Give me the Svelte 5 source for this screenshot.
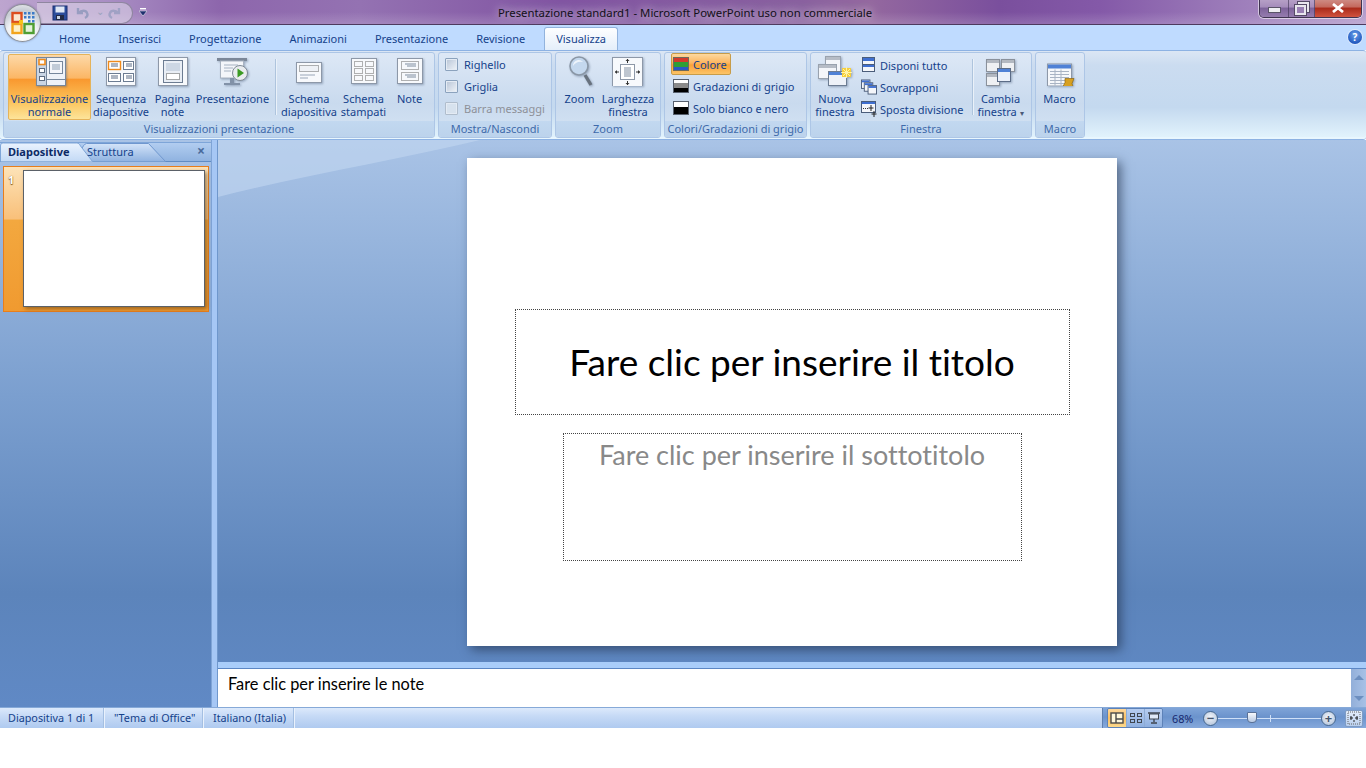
<script lang="ts">
	const tabs = ['Home', 'Inserisci', 'Progettazione', 'Animazioni', 'Presentazione', 'Revisione', 'Visualizza'];
	const active = 'Visualizza';
</script>

<div class="app">
	<header class="titlebar">
		<div class="qat">
			<svg width="16" height="16" viewBox="0 0 16 16">
				<rect x="1" y="1" width="14" height="14" fill="#2b4c9b" stroke="#1b2f70" />
				<rect x="3.5" y="1.5" width="9" height="6" fill="#dfe7f5" />
				<rect x="4" y="10" width="8" height="5" fill="#222a44" />
				<rect x="5" y="11" width="3" height="3" fill="#c9d2e4" />
			</svg>
			<svg class="dim" width="14" height="14" viewBox="0 0 14 14">
				<path d="M2 2v5h5M3 7c2-3 7-3 8 0 1 2 0 4-2 5" fill="none" stroke="#8894b8" stroke-width="2.4" />
			</svg>
			<span class="caret">⌄</span>
			<svg class="dim redo" width="14" height="14" viewBox="0 0 14 14">
				<path d="M12 2v5H7M11 7C9 4 4 4 3 7c-1 2 0 4 2 5" fill="none" stroke="#8894b8" stroke-width="2.4" />
			</svg>
		</div>
		<svg class="qat-more" width="8" height="9" viewBox="0 0 8 9">
			<rect x="1" y="0" width="6" height="1.4" fill="#fff" />
			<path d="M0 3h8L4 8z" fill="#1f2f6e" stroke="#fff" stroke-width=".5" />
		</svg>
		<div class="title">Presentazione standard1 - Microsoft PowerPoint uso non commerciale</div>
		<div class="winctl">
			<span class="wbtn min"><i></i></span>
			<span class="wbtn max"><i></i><b></b></span>
			<span class="wbtn close">
				<svg width="14" height="10" viewBox="0 0 14 10"><path d="M2 1l10 8M12 1L2 9" stroke="#fff" stroke-width="2.8" /></svg>
			</span>
		</div>
	</header>

	<div class="office-btn">
		<svg width="24" height="24" viewBox="0 0 24 24">
			<rect x="1.500" y="2" width="9" height="9" fill="#fbe6d0" stroke="#dc4d1f" stroke-width="2.400" />
			<rect x="1.500" y="13" width="9" height="9" fill="#fdf1c8" stroke="#f2a41d" stroke-width="2.400" />
			<rect x="13.500" y="13" width="9" height="9" fill="#e4f3da" stroke="#4f9e32" stroke-width="2.400" />
			<g fill="#3b7bc8">
				<rect x="13" y="1" width="2.500" height="2.500" />
				<rect x="17" y="1" width="2.500" height="2.500" />
				<rect x="21" y="1" width="2.500" height="2.500" />
				<rect x="13" y="5" width="2.500" height="2.500" />
				<rect x="17" y="5" width="2.500" height="2.500" />
				<rect x="21" y="5" width="2.500" height="2.500" />
				<rect x="17" y="9" width="2.500" height="2.500" />
				<rect x="21" y="9" width="2.500" height="2.500" />
			</g>
			<rect x="8" y="9" width="4" height="4" fill="#f6c21a" />
		</svg>
	</div>

	<nav class="tabs">
		{#each tabs as tab}
			<span class="tab" class:on={tab === active}>{tab}</span>
		{/each}
		<span class="help">?</span>
	</nav>

	<section class="ribbon">
		<div class="group g1">
			<div class="items">
				<div class="big w83 hot">
					<svg width="32" height="32" viewBox="0 0 32 32">
						<rect x="2.5" y="3.5" width="29" height="28" fill="#eef2f8" stroke="#76879c" />
						<rect x="3" y="4" width="9" height="27" fill="#c9d5e4" />
						<path d="M12.5 4v27M12.5 25.5h19" stroke="#76879c" fill="none" />
						<rect x="15.5" y="7.5" width="13" height="12" fill="#f4f6fa" stroke="#76879c" />
						<path d="M18 11h8M18 13h8M18 15h8" stroke="#8ea0b5" />
						<rect x="5" y="5.5" width="6" height="5" fill="#fff" stroke="#ef8a1b" stroke-width="1.6" />
						<rect x="5.5" y="14.5" width="5" height="4" fill="#fff" stroke="#5c6b80" />
						<rect x="5.5" y="22.5" width="5" height="4" fill="#fff" stroke="#5c6b80" />
					</svg>
					<span>Visualizzazione<br />normale</span>
				</div>
				<div class="big w60">
					<svg width="32" height="32" viewBox="0 0 32 32">
						<rect x="1.5" y="3.5" width="29" height="28" fill="#f7f9fc" stroke="#8d98a8" />
						<rect x="3.5" y="7.5" width="12" height="8" fill="#fff" stroke="#ef8a1b" stroke-width="1.4" />
						<rect x="18.5" y="7.5" width="10" height="8" fill="#fff" stroke="#6c7c92" />
						<rect x="3.5" y="19.5" width="12" height="8" fill="#fff" stroke="#6c7c92" />
						<rect x="18.5" y="19.5" width="10" height="8" fill="#fff" stroke="#6c7c92" />
						<path d="M6 10h7M6 12h7M21 10h6M21 12h6M6 22h7M6 24h7M21 22h6M21 24h6" stroke="#5d6d85" />
					</svg>
					<span>Sequenza<br />diapositive</span>
				</div>
				<div class="big w43">
					<svg width="32" height="32" viewBox="0 0 32 32">
						<rect x="1.5" y="3.5" width="29" height="28" fill="#f7f9fc" stroke="#8d98a8" />
						<rect x="6.5" y="6.5" width="19" height="22" fill="#e9eef5" stroke="#6c7c92" />
						<rect x="9" y="9" width="14" height="8" fill="#cdd7e4" />
						<rect x="9.5" y="19.5" width="13" height="6" fill="#fff" stroke="#555" stroke-dasharray="1 1" />
					</svg>
					<span>Pagina<br />note</span>
				</div>
				<div class="big w77">
					<svg width="32" height="32" viewBox="0 0 32 32">
						<g transform="translate(0 2)">
							<rect x="0" y="2" width="30" height="3" fill="#7b8798" />
							<rect x="3.5" y="5" width="23" height="17" fill="#f4f6fa" stroke="#a8b2c0" />
							<path d="M7 9h14M7 12h9M7 15h7" stroke="#a6b2c2" />
							<rect x="13" y="22" width="4" height="5" fill="#8292a8" />
							<rect x="7" y="27" width="16" height="2" fill="#8292a8" />
							<circle cx="23" cy="17" r="7.500" fill="#e9ecef" stroke="#7f8a96" />
							<path d="M20.500 12.500l6.500 4.500-6.500 4.500z" fill="#3a9a22" />
						</g>
					</svg>
					<span>Presentazione</span>
				</div>
				<i class="vsep"></i>
				<div class="big w60">
					<svg width="32" height="32" viewBox="0 0 32 32">
						<rect x="3.5" y="8.500" width="25" height="20" fill="#f7f9fc" stroke="#8d98a8" />
						<rect x="6.5" y="11.500" width="19" height="6" fill="#eef1f6" stroke="#666" stroke-dasharray="1 1" />
						<path d="M7 21h15M7 24h8" stroke="#99a6b8" />
					</svg>
					<span>Schema<br />diapositiva</span>
				</div>
				<div class="big w49">
					<svg width="32" height="32" viewBox="0 0 32 32">
						<rect x="3.5" y="4.500" width="25" height="25" fill="#f7f9fc" stroke="#8d98a8" />
						<g fill="none" stroke="#666" stroke-dasharray="1 1">
							<rect x="6.500" y="7.500" width="8" height="5" />
							<rect x="17.500" y="7.500" width="8" height="5" />
							<rect x="6.500" y="14.500" width="8" height="5" />
							<rect x="17.500" y="14.500" width="8" height="5" />
							<rect x="6.500" y="21.500" width="8" height="5" />
							<rect x="17.500" y="21.500" width="8" height="5" />
						</g>
					</svg>
					<span>Schema<br />stampati</span>
				</div>
				<div class="big w43">
					<svg width="32" height="32" viewBox="0 0 32 32">
						<rect x="3.500" y="4.500" width="25" height="25" fill="#f7f9fc" stroke="#8d98a8" />
						<g fill="none" stroke="#666" stroke-dasharray="1 1">
							<rect x="7.500" y="7.500" width="17" height="8" />
							<rect x="7.500" y="18.500" width="17" height="8" />
						</g>
						<path d="M11 10h11M13 12h9M11 21h11M13 23h9" stroke="#7f8da0" />
					</svg>
					<span>Note</span>
				</div>
			</div>
			<div class="glabel">Visualizzazioni presentazione</div>
		</div>

		<div class="group g2">
			<div class="stack">
				<label class="check"><i></i>Righello</label>
				<label class="check"><i></i>Griglia</label>
				<label class="check off"><i></i>Barra messaggi</label>
			</div>
			<div class="glabel">Mostra/Nascondi</div>
		</div>

		<div class="group g3">
			<div class="items">
				<div class="big w47">
					<svg width="32" height="32" viewBox="0 0 32 32">
						<path d="M21 21l6 10" stroke="#68727e" stroke-width="3.400" />
						<circle cx="15" cy="12" r="9" fill="#c4d8ee" stroke="#8a97a6" stroke-width="1.600" />
						<path d="M9 12c0-4 3-6 6-6 2 0 3 1 4 2-5-1-8 1-10 4z" fill="#eef4fb" />
					</svg>
					<span>Zoom</span>
				</div>
				<div class="big w50">
					<svg width="32" height="32" viewBox="0 0 32 32">
						<g transform="translate(0 2)">
							<rect x=".5" y="1.500" width="30" height="29" fill="#f7f9fc" stroke="#8d98a8" />
							<rect x="8.500" y="8.500" width="14" height="15" fill="#fff" stroke="#8d98a8" />
							<path d="M12 12h7M12 14h7M12 16h7M12 18h7M12 20h7" stroke="#7f8da0" />
							<path d="M15.500 3v4M15.500 25v4M3 16h4M24 16h4" stroke="#333" />
							<path d="M15.500 3l-2 2h4zM15.500 29l-2-2h4zM3 16l2-2v4zM28 16l-2-2v4z" fill="#333" />
						</g>
					</svg>
					<span>Larghezza<br />finestra</span>
				</div>
			</div>
			<div class="glabel">Zoom</div>
		</div>

		<div class="group g4">
			<div class="stack">
				<div class="row hot"><i class="swatch color"></i>Colore</div>
				<div class="row"><i class="swatch gray"></i>Gradazioni di grigio</div>
				<div class="row"><i class="swatch bw"></i>Solo bianco e nero</div>
			</div>
			<div class="glabel">Colori/Gradazioni di grigio</div>
		</div>

		<div class="group g5">
			<div class="items">
				<div class="big w48">
					<svg width="36" height="32" viewBox="0 0 36 32">
						<rect x="8.500" y="2.500" width="15" height="19" fill="#f4f6fa" stroke="#99a2ae" />
						<rect x="9" y="3" width="14" height="3" fill="#b6bcc6" />
						<rect x="1.500" y="10.500" width="18" height="14" fill="#f4f6fa" stroke="#99a2ae" />
						<rect x="2" y="11" width="17" height="3" fill="#b6bcc6" />
						<rect x="11.500" y="17.500" width="18" height="14" fill="#eef2f8" stroke="#6c7c92" />
						<rect x="12" y="18" width="17" height="3" fill="#4f81d6" />
						<rect x="25" y="14" width="9" height="9" fill="#f6cf3c" />
						<path d="M29.500 13v11M24 18.500h11M26 15l7 7M33 15l-7 7" stroke="#fff3a8" />
					</svg>
					<span>Nuova<br />finestra</span>
				</div>
				<div class="stack small">
					<div class="row">
						<svg width="16" height="16" viewBox="0 0 14 16">
							<rect x=".5" y=".5" width="12" height="14" fill="#f4f6fa" stroke="#4b5d7a" />
							<rect x="1" y="1" width="11" height="3" fill="#3f6fd0" />
							<rect x="1" y="8" width="11" height="2" fill="#3f6fd0" />
							<path d="M1 7.500h11" stroke="#4b5d7a" />
						</svg>
						Disponi tutto
					</div>
					<div class="row">
						<svg width="16" height="16" viewBox="0 0 17 16">
							<rect x=".5" y=".5" width="9" height="9" fill="#f4f6fa" stroke="#4b5d7a" />
							<rect x="1" y="1" width="8" height="2" fill="#3f6fd0" />
							<rect x="3.500" y="3.500" width="9" height="9" fill="#f4f6fa" stroke="#4b5d7a" />
							<rect x="4" y="4" width="8" height="2" fill="#3f6fd0" />
							<rect x="7.500" y="6.500" width="9" height="9" fill="#f4f6fa" stroke="#4b5d7a" />
							<rect x="8" y="7" width="8" height="2" fill="#3f6fd0" />
						</svg>
						Sovrapponi
					</div>
					<div class="row">
						<svg width="16" height="16" viewBox="0 0 16 16">
							<rect x=".5" y=".5" width="14" height="11" fill="#f4f6fa" stroke="#4b5d7a" />
							<rect x="1" y="1" width="13" height="2" fill="#3f6fd0" />
							<path d="M2 7.500h6" stroke="#333" stroke-dasharray="1 1" />
							<path d="M10 4v6M7.500 7h5M13 10v6M10.500 13h5" stroke="#222" />
						</svg>
						Sposta divisione
					</div>
				</div>
				<i class="vsep s5"></i>
				<div class="big w56">
					<svg width="32" height="32" viewBox="0 0 32 32">
						<g transform="translate(0 3)">
							<rect x="1.500" y="2.500" width="13" height="12" fill="#eef0f3" stroke="#8a919b" />
							<rect x="2" y="3" width="12" height="3" fill="#b2b8c1" />
							<rect x="16.500" y="2.500" width="13" height="12" fill="#eef0f3" stroke="#8a919b" />
							<rect x="17" y="3" width="12" height="3" fill="#b2b8c1" />
							<rect x="1.500" y="16.500" width="13" height="12" fill="#eef0f3" stroke="#8a919b" />
							<rect x="2" y="17" width="12" height="3" fill="#b2b8c1" />
							<rect x="12.500" y="11.500" width="13" height="13" fill="#eaf0fa" stroke="#5b6c86" />
							<rect x="13" y="12" width="12" height="3" fill="#4f81d6" />
						</g>
					</svg>
					<span>Cambia<br />finestra <em>▾</em></span>
				</div>
			</div>
			<div class="glabel">Finestra</div>
		</div>

		<div class="group g6">
			<div class="items">
				<div class="big w47">
					<svg width="32" height="32" viewBox="0 0 32 32">
						<g transform="translate(0 3.500)">
							<rect x="3.500" y="6.500" width="24" height="22" fill="#f6f8fb" stroke="#8d98a8" />
							<rect x="4" y="7" width="23" height="4" fill="#4f81d6" />
							<path d="M6 14h19M6 17h19M6 20h19M6 23h19M6 26h14M11 12v16M17 12v16" stroke="#a9b4c4" />
							<path d="M21 21h9l-2 5 1 3h-10l2-4z" fill="#d7a021" stroke="#8c6613" stroke-width=".7" />
						</g>
					</svg>
					<span>Macro</span>
				</div>
			</div>
			<div class="glabel">Macro</div>
		</div>
	</section>

	<main class="work">
		<aside class="pane">
			<div class="pane-tabs">
				<svg class="tabshape" width="212" height="20" viewBox="0 0 212 20">
					<defs>
						<linearGradient id="tabOn" x1="0" y1="0" x2="0" y2="1">
							<stop offset="0" stop-color="#eaf3fe" />
							<stop offset="1" stop-color="#c3d9f5" />
						</linearGradient>
						<linearGradient id="tabOff" x1="0" y1="0" x2="0" y2="1">
							<stop offset="0" stop-color="#d4e4f9" />
							<stop offset="1" stop-color="#8fb2e0" />
						</linearGradient>
					</defs>
					<path d="M79.500 19.500c1-7 2-17 7-18h62l17 18" fill="url(#tabOff)" stroke="#6f97cf" />
					<path d="M.5 19.500V4c0-2 1-3 3-3h73c2 0 3 1 4 3l12 15.500" fill="url(#tabOn)" stroke="#7ea5d8" />
				</svg>
				<span class="ptab on">Diapositive</span>
				<span class="ptab">Struttura</span>
				<span class="pclose">×</span>
			</div>
			<div class="thumbrow">
				<span class="num">1</span>
				<div class="thumb"></div>
			</div>
		</aside>

		<div class="right">
			<div class="stage">
				<svg class="swoosh" width="300" height="62" viewBox="0 0 300 62" preserveAspectRatio="none">
					<path d="M0 0h262C180 20 80 36 0 57z" fill="#c2d6f0" fill-opacity=".62" />
				</svg>
				<div class="slide">
					<div class="ph ph-title">Fare clic per inserire il titolo</div>
					<div class="ph ph-sub">Fare clic per inserire il sottotitolo</div>
				</div>
			</div>
			<div class="notes">
				<div class="notes-text">Fare clic per inserire le note</div>
				<div class="scroll"><i class="up"></i><i class="down"></i></div>
			</div>
		</div>
	</main>

	<footer class="status">
		<span class="cell">Diapositiva 1 di 1</span>
		<span class="cell">"Tema di Office"</span>
		<span class="cell">Italiano (Italia)</span>
		<div class="status-right">
			<div class="views">
				<span class="view on">
					<svg width="14" height="12" viewBox="0 0 14 12"><rect x="1" y="1" width="12" height="10" fill="#fff6d8" stroke="#4a4a4a" stroke-width="1.400" /><path d="M6 1v10M6 7h7" stroke="#4a4a4a" stroke-width="1.400" /></svg>
				</span>
				<span class="view">
					<svg width="14" height="12" viewBox="0 0 14 12"><g fill="none" stroke="#3f4650"><rect x="1.500" y="1.500" width="4" height="3" /><rect x="8.500" y="1.500" width="4" height="3" /><rect x="1.500" y="7.500" width="4" height="3" /><rect x="8.500" y="7.500" width="4" height="3" /></g></svg>
				</span>
				<span class="view">
					<svg width="14" height="12" viewBox="0 0 14 12"><path d="M1 1h12" stroke="#3f4650" stroke-width="1.500" /><rect x="2.500" y="2" width="9" height="5" fill="#dfe9f7" stroke="#3f4650" /><path d="M7 7v3M4 11h6" stroke="#3f4650" stroke-width="1.400" /></svg>
				</span>
			</div>
			<span class="zoomval">68%</span>
			<span class="round">−</span>
			<div class="slider"><i class="tick"></i><i class="knob"></i></div>
			<span class="round">+</span>
			<span class="fit">
				<svg width="14" height="14" viewBox="0 0 14 14"><path d="M1 1h12v12H1z" fill="none" stroke="#666" stroke-dasharray="1 1" /><path d="M3 7h3M8 7h3M10 5v4M4 5v4M7 3v2M7 9v2" stroke="#222" /></svg>
			</span>
		</div>
	</footer>
</div>

<style>
	:global(body) {
		margin: 0;
		background: #fff;
	}

	.app {
		position: relative;
		width: 1366px;
		height: 728px;
		display: flex;
		flex-direction: column;
		overflow: hidden;
		font-family: 'Noto Sans', 'Open Sans', sans-serif;
		font-size: 11px;
		color: #15428b;
	}

	/* title bar */
	.titlebar {
		position: relative;
		height: 25px;
		flex: none;
		display: flex;
		align-items: flex-start;
		padding-left: 37px;
		box-sizing: border-box;
		border-bottom: 1px solid #4d3a5e;
		background:
			linear-gradient(180deg, rgba(255, 255, 255, 0) 50%, rgba(255, 255, 255, 0.16) 100%),
			linear-gradient(90deg, #bda5cf 0, #a88dc3 110px, #8d66ac 220px, #9472b2 360px, #8154a2 560px, #89609f 800px, #94689f 870px, #7a4f9d 1000px, #8459a8 1100px, #9a79b8 1220px, #b49ccb 1366px);
	}

	.qat {
		display: flex;
		align-items: center;
		gap: 8px;
		height: 22px;
		width: 96px;
		padding-left: 15px;
		box-sizing: border-box;
		margin-top: 2px;
		border: 1px solid #8f86a0;
		border-left: none;
		border-radius: 0 12px 12px 0;
		background: rgba(224, 216, 234, 0.55);
	}

	.qat svg.dim {
		opacity: 0.75;
	}

	.qat svg.redo {
		opacity: 0.6;
	}

	.caret {
		color: #9aa2bd;
		font-size: 10px;
		line-height: 10px;
		width: 6px;
		margin: -4px -2.5px 0;
	}

	.qat-more {
		margin: 8px 0 0 6px;
	}

	.title {
		position: absolute;
		left: 0;
		right: 0;
		top: 5px;
		text-align: center;
		padding-left: 4px;
		font-size: 11.35px;
		line-height: 16px;
		color: #121018;
		text-shadow: 0 0 8px rgba(255, 255, 255, 0.75), 0 0 14px rgba(255, 255, 255, 0.5);
		pointer-events: none;
	}

	.winctl {
		position: absolute;
		top: -1px;
		right: 4px;
		display: flex;
		height: 19px;
		box-sizing: border-box;
		border: 1px solid #3f3450;
		border-top: none;
		border-radius: 0 0 5px 5px;
		box-shadow: 0 0 0 1px rgba(255, 255, 255, 0.55);
		overflow: hidden;
	}

	.wbtn {
		position: relative;
		display: flex;
		align-items: center;
		justify-content: center;
		height: 100%;
		background: linear-gradient(180deg, #b8a2c8 0, #a58cbb 45%, #7d629a 50%, #957cae 100%);
		border-right: 1px solid rgba(60, 50, 80, 0.6);
	}

	.min {
		width: 28px;
	}

	.min i {
		width: 11px;
		height: 4px;
		margin-top: 3px;
		background: #eeeef2;
		border: 1px solid #5a5468;
	}

	.max {
		width: 25px;
	}

	.max i,
	.max b {
		position: absolute;
		width: 7px;
		height: 6px;
		border: 2px solid #e9e7ee;
		outline: 1px solid #554a66;
	}

	.max i {
		left: 9px;
		top: 3px;
	}

	.max b {
		left: 6px;
		top: 6px;
		background: #9a80b4;
	}

	.close {
		width: 46px;
		border-right: none;
		background: linear-gradient(180deg, #cf8f88 0, #c4685c 45%, #a92a1a 50%, #d0533f 100%);
	}

	.office-btn {
		position: absolute;
		left: 4px;
		top: 4px;
		width: 37px;
		height: 38px;
		box-sizing: border-box;
		display: flex;
		align-items: center;
		justify-content: center;
		border-radius: 50%;
		border: 1px solid #8c8f96;
		background: radial-gradient(circle at 50% 80%, #ffffff 0, #eef1f4 45%, #c7ccd4 70%, #f4f4f6 100%);
		box-shadow: 0 0 2px rgba(50, 60, 90, 0.5);
		z-index: 2;
	}

	/* tabs */
	.tabs {
		position: relative;
		flex: none;
		height: 25px;
		display: flex;
		align-items: flex-end;
		padding-left: 45px;
		box-sizing: border-box;
		background: #bfdbff;
	}

	.tab {
		padding: 0 14px;
		height: 23px;
		line-height: 24px;
		box-sizing: border-box;
		white-space: nowrap;
	}

	.tab.on {
		margin-left: 5px;
		padding: 0 11px;
		background: linear-gradient(180deg, #fdfeff 0, #e4eefa 100%);
		border: 1px solid #92b3dd;
		border-bottom: none;
		border-radius: 3px 3px 0 0;
		line-height: 22px;
	}

	.help {
		position: absolute;
		right: 4px;
		top: 5px;
		width: 14px;
		height: 14px;
		border-radius: 50%;
		text-align: center;
		font-weight: 700;
		font-size: 10px;
		line-height: 14px;
		color: #fff;
		background: radial-gradient(circle at 50% 35%, #6aa0ea 0, #1f56bd 75%);
		box-shadow: 0 0 0 1px #dce8fb;
	}

	/* ribbon */
	.ribbon {
		flex: none;
		height: 90px;
		box-sizing: border-box;
		display: flex;
		gap: 3px;
		padding: 1px 3px 0;
		border: 1px solid #8db2e3;
		border-width: 1px 0;
		border-radius: 3px;
		background: linear-gradient(180deg, #dbe6f4 0, #cbdcf0 16%, #c4d9ef 64%, #e3f4fd 100%);
		box-shadow: inset 0 -2px 0 #e8f6fe;
	}

	.group {
		height: 86px;
		box-sizing: border-box;
		display: flex;
		flex-direction: column;
		border: 1px solid #adc6e6;
		border-radius: 3px;
		background: linear-gradient(180deg, #dde8f6 0, #c9daee 60%, #d5e4f4 100%);
		overflow: hidden;
	}

	.g1 {
		width: 432px;
	}

	.g2 {
		width: 114px;
	}

	.g3 {
		width: 106px;
	}

	.g4 {
		width: 143px;
	}

	.g5 {
		width: 222px;
	}

	.g6 {
		width: 50px;
	}

	.items {
		flex: 1;
		display: flex;
		padding: 1px 0 0 4px;
	}

	.g3 .items,
	.g5 .items,
	.g6 .items {
		padding-left: 0;
	}

	.glabel {
		height: 16px;
		flex: none;
		text-align: center;
		line-height: 15px;
		color: #3e6aaa;
		background: linear-gradient(180deg, #c2d8f0 0, #bcd3ec 100%);
		white-space: nowrap;
	}

	.big {
		height: 66px;
		box-sizing: border-box;
		display: flex;
		flex-direction: column;
		align-items: center;
		flex: none;
		text-align: center;
		line-height: 13px;
		white-space: nowrap;
		border: 1px solid transparent;
		border-radius: 2px;
	}

	.big svg {
		flex: none;
		margin: -1px 0 6px;
		filter: drop-shadow(1px 1px 1px rgba(70, 90, 120, 0.45));
	}

	.big em {
		font-style: normal;
		font-size: 8px;
		color: #4a5a78;
	}

	.w83 {
		width: 83px;
	}

	.w77 {
		width: 77px;
	}

	.w60 {
		width: 60px;
	}

	.w56 {
		width: 56px;
	}

	.w50 {
		width: 50px;
	}

	.w49 {
		width: 49px;
	}

	.w48 {
		width: 48px;
	}

	.w47 {
		width: 47px;
	}

	.w43 {
		width: 43px;
	}

	.big.hot {
		border-color: #e5b35a;
		background: linear-gradient(180deg, #fdd9a8 0, #fbb665 36%, #f9982f 38%, #fbc35a 72%, #fde49a 100%);
	}

	.vsep {
		flex: none;
		width: 1px;
		height: 56px;
		margin: 5px 3px 0 4px;
		background: #aec4dd;
		box-shadow: 1px 0 0 #eaf1f9;
	}

	.stack {
		flex: 1;
		display: flex;
		flex-direction: column;
		padding: 0 0 0 6px;
	}

	.check {
		height: 22px;
		display: flex;
		align-items: center;
		gap: 6px;
	}

	.check i {
		width: 11px;
		height: 11px;
		border: 1px solid #8ba2bd;
		border-radius: 1px;
		background: linear-gradient(135deg, #b7c4d6, #f0f4f9);
		box-shadow: inset 0 0 0 1px #e4ebf4;
	}

	.check.off {
		color: #8d9098;
	}

	.check.off i {
		border-color: #b0bdcc;
		background: #d7e2ee;
	}

	.row {
		height: 22px;
		width: max-content;
		box-sizing: border-box;
		display: flex;
		align-items: center;
		gap: 3px;
		padding: 0 3px 0 1px;
		white-space: nowrap;
		border: 1px solid transparent;
		border-radius: 2px;
	}

	.row.hot {
		border-color: #c79c4a;
		background: linear-gradient(180deg, #fdd9a0 0, #fbb55f 45%, #f9a238 55%, #fcc468 100%);
	}

	.swatch {
		width: 16px;
		height: 14px;
		flex: none;
		margin-right: 1px;
	}

	.swatch.color {
		background: linear-gradient(180deg, #d33a2c 0 35%, #2f9e36 35% 68%, #2a58c4 68%);
		outline: 1px solid #6d6a5c;
		outline-offset: -1px;
	}

	.swatch.gray {
		background: linear-gradient(180deg, #fff 0 30%, #8a8a8a 30% 65%, #000 65%);
		outline: 1px solid #57606e;
		outline-offset: -1px;
	}

	.swatch.bw {
		background: linear-gradient(180deg, #fff 0 45%, #000 45%);
		outline: 1px solid #57606e;
		outline-offset: -1px;
	}

	.stack.small {
		flex: none;
		padding: 0;
	}

	.vsep.s5 {
		margin: 5px 0 0 4px;
	}

	/* work area */
	.work {
		flex: 1;
		min-height: 0;
		display: flex;
		background: linear-gradient(180deg, #a9c3e6 0, #7b9fcf 45%, #5c84bb 80%, #6089c5 100%);
	}

	.pane {
		width: 212px;
		flex: none;
		display: flex;
		flex-direction: column;
		padding-top: 2px;
		box-sizing: border-box;
		border-right: 1px solid #7fa4d6;
	}

	.pane-tabs {
		position: relative;
		height: 20px;
		flex: none;
		box-sizing: border-box;
		display: flex;
		border-bottom: 1px solid #5f8cc4;
		border-top: 1px solid #7ea5d8;
		background: linear-gradient(180deg, #b2cdf0, #90b3e0);
	}

	.tabshape {
		position: absolute;
		left: 0;
		top: -1px;
	}

	.ptab {
		position: relative;
		width: 79px;
		flex: none;
		line-height: 17px;
		padding-left: 8px;
		box-sizing: border-box;
	}

	.ptab.on {
		font-weight: 700;
		color: #0d2a66;
	}

	.pclose {
		position: absolute;
		right: 6px;
		top: -1px;
		font-weight: 700;
		font-size: 14px;
		line-height: 18px;
		color: #4a6a9c;
	}

	.thumbrow {
		margin: 4px 2px 0 3px;
		height: 146px;
		box-sizing: border-box;
		display: flex;
		padding: 3px 3px 4px 0;
		border: 1px solid #e87e1c;
		background: linear-gradient(180deg, #fde3b8 0, #f9c07a 36%, #f3a83f 37%, #f09a30 100%);
	}

	.num {
		width: 19px;
		flex: none;
		padding-left: 4px;
		box-sizing: border-box;
		font-weight: 700;
		font-size: 11px;
		line-height: 20px;
		color: #fff;
		text-shadow: 0 1px 1px #7d5216, 0 0 1px #7d5216;
	}

	.thumb {
		flex: 1;
		background: #fff;
		border: 1px solid #5b6168;
		box-shadow: 2px 2px 4px rgba(90, 60, 20, 0.55);
	}

	.right {
		flex: 1;
		min-width: 0;
		display: flex;
		flex-direction: column;
		border-left: 1px solid #6f97cc;
		margin-left: 5px;
		box-shadow: -5px 0 0 #a6c7f5;
	}

	.stage {
		position: relative;
		flex: 1;
		min-height: 0;
		display: flex;
		justify-content: center;
		align-items: flex-start;
		padding: 18px 0 0 0;
		overflow: hidden;
		border-bottom: 6px solid #a9cdfa;
	}

	.swoosh {
		position: absolute;
		left: 0;
		top: 0;
	}

	.slide {
		position: relative;
		width: 650px;
		height: 488px;
		flex: none;
		display: flex;
		flex-direction: column;
		align-items: center;
		gap: 18px;
		padding-top: 151px;
		box-sizing: border-box;
		background: #fff;
		box-shadow: 4px 4px 10px rgba(30, 45, 70, 0.6);
		font-family: Lato, 'Open Sans', sans-serif;
		font-variant-ligatures: none;
		color: #000;
	}

	.ph {
		box-sizing: border-box;
		border: 1px dotted #444;
		text-align: center;
	}

	.ph-title {
		width: 555px;
		height: 106px;
		font-size: 37px;
		line-height: 103px;
	}

	.ph-sub {
		width: 459px;
		height: 128px;
		font-size: 27px;
		line-height: 42px;
		color: #898989;
	}

	.notes {
		height: 39px;
		flex: none;
		display: flex;
		background: #fff;
		border-top: 1px solid #5b86c4;
		box-sizing: border-box;
		color: #000;
	}

	.notes-text {
		flex: 1;
		padding: 5px 0 0 10px;
		font-family: Lato, 'Open Sans', sans-serif;
		font-variant-ligatures: none;
		font-size: 16.35px;
		line-height: 20px;
	}

	.scroll {
		width: 15px;
		flex: none;
		display: flex;
		flex-direction: column;
		align-items: center;
		justify-content: space-between;
		padding: 6px 0 6px;
		box-sizing: border-box;
		background: linear-gradient(90deg, #92afd9, #a8c1e6);
	}

	.scroll i {
		width: 0;
		height: 0;
		border: 5px solid transparent;
	}

	.scroll .up {
		border-bottom: 5px solid #6d8fc0;
		border-top: none;
	}

	.scroll .down {
		border-top: 5px solid #6d8fc0;
		border-bottom: none;
	}

	/* status bar */
	.status {
		flex: none;
		height: 21px;
		box-sizing: border-box;
		display: flex;
		align-items: center;
		font-size: 10.8px;
		border-top: 1px solid #86a9d8;
		background: linear-gradient(180deg, #dce9fb 0, #c6daf6 40%, #afcaf0 100%);
	}

	.cell {
		height: 100%;
		line-height: 19px;
		padding: 0 0 0 8px;
		box-sizing: border-box;
		border-right: 1px solid #a4bfe2;
		box-shadow: 1px 0 0 #e9f1fc;
		white-space: nowrap;
	}

	.cell:nth-child(1) {
		width: 104px;
	}

	.cell:nth-child(2) {
		width: 99px;
		padding-left: 10px;
	}

	.cell:nth-child(3) {
		width: 91px;
		padding-left: 10px;
	}

	.status-right {
		margin-left: auto;
		width: 264px;
		height: 100%;
		box-sizing: border-box;
		display: flex;
		align-items: center;
		padding-left: 4px;
		border-left: 1px solid #5f7fae;
		background: linear-gradient(180deg, #7fa4d8 0, #6b93cc 45%, #86a9dc 100%);
	}

	.views {
		display: flex;
		height: 18px;
		border: 1px solid #5d82b8;
		border-radius: 2px;
		overflow: hidden;
	}

	.view {
		width: 18px;
		box-sizing: border-box;
		display: flex;
		align-items: center;
		justify-content: center;
		border-left: 1px solid #8eacd6;
		background: linear-gradient(180deg, #b6cdf0, #8fb0e0);
	}

	.view.on {
		border-left: none;
		background: linear-gradient(180deg, #fdd79b 0, #fbbf62 50%, #fbd98d 100%);
	}

	.zoomval {
		width: 38px;
		margin-left: 2px;
		padding-left: 7px;
		box-sizing: border-box;
		color: #16286e;
	}

	.round {
		width: 15px;
		height: 15px;
		flex: none;
		box-sizing: border-box;
		border: 1px solid #47688f;
		border-radius: 50%;
		text-align: center;
		font-weight: 700;
		font-size: 13px;
		line-height: 12px;
		color: #44546c;
		background: radial-gradient(circle at 50% 40%, #f3f6fb, #a9bcd6);
	}

	.slider {
		position: relative;
		width: 103px;
		height: 1px;
		flex: none;
		background: #cfe0f7;
	}

	.tick {
		position: absolute;
		left: 52px;
		top: -3px;
		width: 1px;
		height: 7px;
		background: #cfe0f7;
	}

	.knob {
		position: absolute;
		left: 29px;
		top: -6px;
		width: 8px;
		height: 9px;
		border: 1px solid #5a7196;
		border-radius: 1px 1px 4px 4px;
		background: linear-gradient(180deg, #f6f8fc, #b6c8e2);
	}

	.fit {
		width: 16px;
		height: 15px;
		margin-left: 9px;
		display: flex;
		align-items: center;
		justify-content: center;
		border: 1px solid #7f9cc4;
		border-radius: 2px;
		background: linear-gradient(180deg, #e5eefb, #b9cfee);
	}
</style>
